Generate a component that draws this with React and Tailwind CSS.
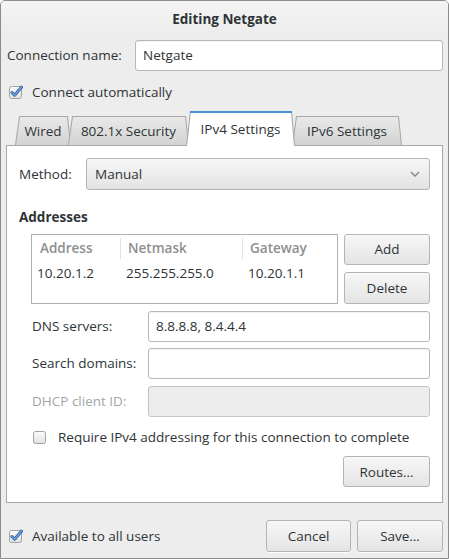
import React from 'react';

const FONT = { fontFamily: '"Open Sans", "DejaVu Sans", sans-serif' };

// Adwaita-ish checkbox
const Check = ({ checked }) => (
  <svg width="14" height="14" viewBox="0 0 14 14" className="shrink-0">
    <defs>
      <linearGradient id={checked ? 'cbOn' : 'cbOff'} x1="0" y1="0" x2="0" y2="1">
        <stop offset="0" stopColor="#fdfdfd" />
        <stop offset="1" stopColor="#e1e1e1" />
      </linearGradient>
    </defs>
    <rect x="0.5" y="1.5" width="12" height="12" rx="2" fill={`url(#${checked ? 'cbOn' : 'cbOff'})`} stroke="#a3a3a3" />
    {checked && (
      <>
        <path d="M3 7.5 L5.6 10.2 L12.4 2.2" stroke="#2f5f9c" strokeWidth="3" fill="none" strokeLinecap="round" strokeLinejoin="round" />
        <path d="M3 7.5 L5.6 10.2 L12.4 2.2" stroke="#6aa0e0" strokeWidth="1.6" fill="none" strokeLinecap="round" strokeLinejoin="round" />
      </>
    )}
  </svg>
);

const Button = ({ children, className = '' }) => (
  <div
    className={`flex items-center justify-center rounded-[3px] border border-[#b4b4b4] bg-[linear-gradient(#f7f7f7,#e4e4e4)] text-[13.5px] text-[#2e3436] shadow-[0_1px_0_rgba(255,255,255,0.8)] ${className}`}
  >
    {children}
  </div>
);

const Entry = ({ value, disabled, className = '' }) => (
  <div
    className={`flex h-[31px] items-center rounded-[3px] border px-[7px] text-[13.5px] text-[#2e3436] ${
      disabled
        ? 'border-[#c4c4c4] bg-[#ededed]'
        : 'border-[#b8b8b8] bg-white shadow-[inset_0_1px_1px_rgba(0,0,0,0.06)]'
    } ${className}`}
  >
    {value}
  </div>
);

const Tab = ({ label, active, width }) => (
  <div
    className={`-ml-[3px] ${active ? 'relative z-10 h-[35px] bg-[linear-gradient(#4a90d9_0,#4a90d9_2px,#a6a6a6_2px)] pt-[1px]' : 'mb-[1px] h-[29px] bg-[#a9a9a9] pt-[1px]'} px-[1px] [clip-path:polygon(4px_0,calc(100%_-_3px)_0,100%_100%,0_100%)]`}
    style={{ width }}
  >
    <div
      className={`flex h-full items-center justify-center whitespace-nowrap text-[13.5px] text-[#2e3436] [clip-path:polygon(4px_0,calc(100%_-_3px)_0,100%_100%,0_100%)] ${
        active ? 'bg-[linear-gradient(#4a90d9_0,#4a90d9_1px,#ffffff_1px)] pt-[1px]' : 'bg-[linear-gradient(#e9e9e9,#d3d3d3)] pt-[1px]'
      }`}
    >
      {label}
    </div>
  </div>
);

const FieldRow = ({ label, value, disabled, className = '' }) => (
  <div className={`flex items-center ${className}`}>
    <span className={`w-[129px] shrink-0 whitespace-nowrap pl-[13px] text-[13.5px] ${disabled ? 'text-[#a3a5a5]' : 'text-[#2e3436]'}`}>{label}</span>
    <Entry value={value} disabled={disabled} className="flex-1" />
  </div>
);

export default function App() {
  return (
    <div style={FONT} className="flex h-[559px] w-[449px] flex-col overflow-hidden rounded-t-[5px] border border-[#8b8b8b] bg-[#ededed] text-[#2e3436]">
      {/* title bar */}
      <div className="flex h-[36px] shrink-0 items-center justify-center bg-[linear-gradient(#f4f4f4,#ececec)] text-[13.5px] font-bold">
        Editing Netgate
      </div>

      {/* connection name */}
      <div className="mt-[3px] flex items-center pl-[6px] pr-[5px]">
        <span className="w-[128px] text-[13.5px]">Connection name:</span>
        <Entry value="Netgate" className="flex-1" />
      </div>

      <div className="mt-[8px] flex h-[26px] items-center gap-[9px] pl-[8px]">
        <Check checked />
        <span className="text-[13.5px]">Connect automatically</span>
      </div>

      {/* notebook */}
      <div className="mx-[5px] mt-[6px] flex flex-col">
        <div className="-mb-[1px] flex items-end pl-[12px]">
          <Tab label="Wired" width={56} />
          <Tab label="802.1x Security" width={121} />
          <Tab label="IPv4 Settings" active width={109} />
          <Tab label="IPv6 Settings" width={110} />
        </div>

        <div className="flex h-[358px] flex-col border border-[#a8a8a8] bg-white px-[12px] pt-[12px]">
          <div className="flex items-center">
            <span className="w-[67px] text-[13.5px]">Method:</span>
            <div className="flex h-[32px] flex-1 items-center justify-between rounded-[3px] border border-[#b4b4b4] bg-[linear-gradient(#f6f6f6,#e3e3e3)] pl-[8px] pr-[9px] text-[13.5px]">
              <span>Manual</span>
              <svg width="10" height="6" viewBox="0 0 10 6">
                <path d="M1 1 L5 5 L9 1" stroke="#8a8a8a" strokeWidth="1.5" fill="none" />
              </svg>
            </div>
          </div>

          <div className="mt-[18px] text-[13.5px] font-bold leading-[18px]">Addresses</div>

          <div className="mt-[8px] flex pl-[12px]">
            <div className="h-[70px] flex-1 border border-[#b0b0b0] bg-white text-[13.5px]">
              <div className="flex h-[27px] items-center font-semibold text-[#8d8f8f]">
                <span className="w-[89px] border-r border-[#e2e2e2] pl-[8px]">Address</span>
                <span className="w-[122px] border-r border-[#e2e2e2] pl-[7px]">Netmask</span>
                <span className="pl-[7px]">Gateway</span>
              </div>
              <div className="flex h-[23px] items-center">
                <span className="w-[89px] pl-[5px]">10.20.1.2</span>
                <span className="w-[122px] pl-[5px]">255.255.255.0</span>
                <span className="pl-[5px]">10.20.1.1</span>
              </div>
            </div>
            <div className="ml-[6px] flex w-[86px] flex-col gap-[7px]">
              <Button className="h-[31px]">Add</Button>
              <Button className="h-[32px]">Delete</Button>
            </div>
          </div>

          <FieldRow label="DNS servers:" value="8.8.8.8, 8.4.4.4" className="mt-[7px]" />
          <FieldRow label="Search domains:" value="" className="mt-[6px]" />
          <FieldRow label="DHCP client ID:" value="" disabled className="mt-[7px]" />

          <div className="mt-[10px] flex items-center gap-[11px] pl-[14px]">
            <Check />
            <span className="whitespace-nowrap text-[13.5px]">Require IPv4 addressing for this connection to complete</span>
          </div>

          <div className="mt-[9px] flex justify-end">
            <Button className="h-[31px] w-[87px]">Routes…</Button>
          </div>
        </div>
      </div>

      {/* bottom actions */}
      <div className="mt-[17px] flex items-center pl-[8px] pr-[5px]">
        <div className="flex flex-1 items-center gap-[9px]">
          <Check checked />
          <span className="text-[13.5px]">Available to all users</span>
        </div>
        <Button className="h-[32px] w-[85px]">Cancel</Button>
        <Button className="ml-[6px] h-[32px] w-[86px]">Save…</Button>
      </div>
    </div>
  );
}
